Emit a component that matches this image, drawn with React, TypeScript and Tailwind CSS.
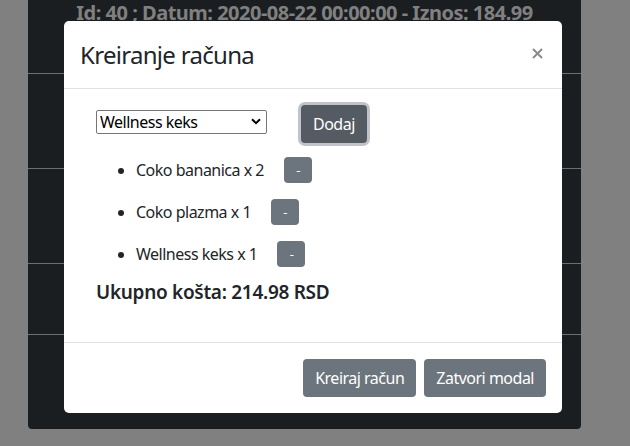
import { useState } from "react";

type Stavka = {
  naziv: string;
  kolicina: number;
};

const pocetneStavke: Stavka[] = [
  { naziv: "Coko bananica", kolicina: 2 },
  { naziv: "Coko plazma", kolicina: 1 },
  { naziv: "Wellness keks", kolicina: 1 },
];

const proizvodi = ["Coko bananica", "Coko plazma", "Wellness keks"];

const App = () => {
  const [izabran, setIzabran] = useState("Wellness keks");
  const [stavke] = useState<Stavka[]>(pocetneStavke);

  return (
    <div
      className="relative w-[630px] h-[446px] overflow-hidden bg-[#808080]"
      style={{ fontFamily: '"Noto Sans", "Open Sans", Arial, sans-serif' }}
    >
      {/* tabela racuna iza modala */}
      <div className="ml-[28px] w-[553px] h-[429px] bg-[#1b1e21] rounded-b-[4px] flex flex-col">
        <div className="h-[74px] border-b border-[#6e6e6e] text-center text-[20px] font-bold leading-[26px] tracking-[-0.5px] text-[#808080]">
          Id: 40 ; Datum: 2020-08-22 00:00:00 - Iznos: 184.99
        </div>
        <div className="h-[95px] border-b border-[#6e6e6e]" />
        <div className="h-[95px] border-b border-[#6e6e6e]" />
        <div className="h-[71px] border-b border-[#6e6e6e]" />
      </div>

      {/* modal */}
      <div className="absolute left-[64px] top-[21px] w-[498px] bg-white rounded-[5px] text-[#212529]">
        <div className="h-[68px] px-[16px] py-[16px] flex justify-between items-start border-b border-[#dee2e6]">
          <h4 className="text-[24px] leading-[36px] tracking-[-0.7px]">Kreiranje računa</h4>
          <button className="mt-[10px] mr-[3px] w-[12px] h-[12px] flex items-center justify-center">
            <svg width="11" height="11" viewBox="0 0 11 11">
              <path d="M1 1 L10 10 M10 1 L1 10" stroke="#8a8a8a" strokeWidth="2" />
            </svg>
          </button>
        </div>

        <div className="h-[253px] p-[16px] tracking-[-0.5px]">
          <div className="flex items-start ml-[16px]">
            <div className="relative mt-[5px]">
              <select
                value={izabran}
                onChange={(e) => setIzabran(e.target.value)}
                className="appearance-none w-[171px] h-[24px] border border-[#767676] rounded-[2px] pl-[3px] text-[16px] leading-[20px] tracking-[-0.5px] bg-white text-black"
              >
                {proizvodi.map((p) => (
                  <option key={p} value={p}>
                    {p}
                  </option>
                ))}
              </select>
              <svg
                className="pointer-events-none absolute right-[6px] top-[8px]"
                width="10"
                height="7"
                viewBox="0 0 10 7"
              >
                <path d="M1 1.2 L5 5.2 L9 1.2" fill="none" stroke="#000" strokeWidth="2" />
              </svg>
            </div>
            <button className="ml-[34px] h-[38px] px-[12px] rounded-[4px] bg-[#545b62] text-white text-[16px] shadow-[0_0_0_3px_rgba(130,138,145,0.5)]">
              Dodaj
            </button>
          </div>

          <ul className="list-disc ml-[16px] pl-[40px] mt-[6px]">
            {stavke.map((s) => (
              <li key={s.naziv} className="py-[8px] text-[16px] leading-[26px]">
                {s.naziv} x {s.kolicina}
                <button className="ml-[20px] w-[28px] h-[26px] align-top rounded-[4px] bg-[#6c757d] text-white text-[13px] leading-[26px]">
                  -
                </button>
              </li>
            ))}
          </ul>

          <h5 className="ml-[16px] mt-[5px] text-[19px] font-semibold leading-[24px] tracking-[-0.3px]">
            Ukupno košta: 214.98 RSD
          </h5>
        </div>

        <div className="p-[12px] flex justify-end border-t border-[#dee2e6] tracking-[-0.5px]">
          <button className="m-[4px] h-[38px] px-[12px] rounded-[4px] bg-[#6c757d] text-white text-[16px]">
            Kreiraj račun
          </button>
          <button className="m-[4px] h-[38px] px-[12px] rounded-[4px] bg-[#6c757d] text-white text-[16px]">
            Zatvori modal
          </button>
        </div>
      </div>
    </div>
  );
};

export default App;
